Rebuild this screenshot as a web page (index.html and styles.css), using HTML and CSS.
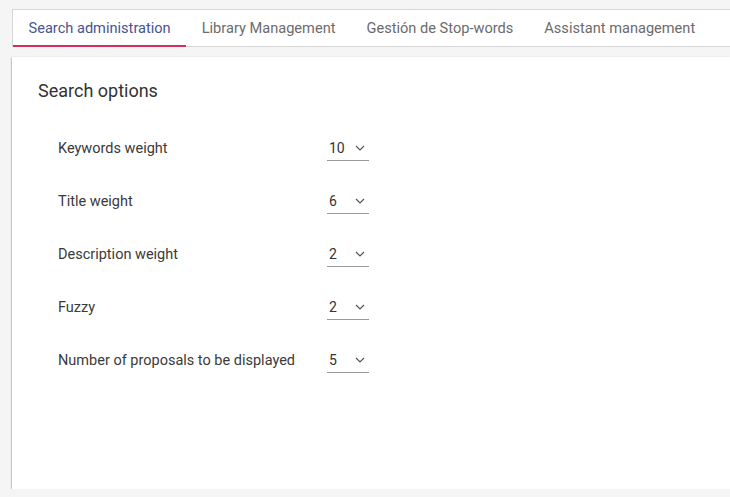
FILE: index.html
```html
<!DOCTYPE html>
<html>
<head>
    <title>Search administration</title>
    <link rel="stylesheet" href="styles.css">
</head>
<body>
    <div class="tabs">
        <div class="tab active">Search administration</div>
        <div class="tab">Library Management</div>
        <div class="tab">Gestión de Stop-words</div>
        <div class="tab">Assistant management</div>
    </div>

    <div class="card">
        <h2>Search options</h2>
        <div class="options">
            <div class="row">
                <span class="label">Keywords weight</span>
                <div class="select"><span>10</span><svg viewBox="0 0 10 6" width="10" height="6"><path d="M1 1l4 4 4-4" fill="none" stroke="#555" stroke-width="1.2"/></svg></div>
            </div>
            <div class="row">
                <span class="label">Title weight</span>
                <div class="select"><span>6</span><svg viewBox="0 0 10 6" width="10" height="6"><path d="M1 1l4 4 4-4" fill="none" stroke="#555" stroke-width="1.2"/></svg></div>
            </div>
            <div class="row">
                <span class="label">Description weight</span>
                <div class="select"><span>2</span><svg viewBox="0 0 10 6" width="10" height="6"><path d="M1 1l4 4 4-4" fill="none" stroke="#555" stroke-width="1.2"/></svg></div>
            </div>
            <div class="row">
                <span class="label">Fuzzy</span>
                <div class="select"><span>2</span><svg viewBox="0 0 10 6" width="10" height="6"><path d="M1 1l4 4 4-4" fill="none" stroke="#555" stroke-width="1.2"/></svg></div>
            </div>
            <div class="row">
                <span class="label">Number of proposals to be displayed</span>
                <div class="select"><span>5</span><svg viewBox="0 0 10 6" width="10" height="6"><path d="M1 1l4 4 4-4" fill="none" stroke="#555" stroke-width="1.2"/></svg></div>
            </div>
        </div>
    </div>
</body>
</html>
```

FILE: styles.css
```css
body {
    margin: 0;
    padding: 9px 0 0 12px;
    background-color: #f5f5f5;
    font-family: Roboto, Arial, sans-serif;
    overflow: hidden;
}

.tabs {
    display: flex;
    height: 36px;
    background-color: #fff;
    border: 1px solid #d6d6d6;
    border-right: none;
}

.tab {
    display: flex;
    align-items: center;
    padding: 0 15.5px;
    font-size: 14.6px;
    color: #6b6b6b;
    border-bottom: 2px solid transparent;
    margin-bottom: -1px;
    white-space: nowrap;
}

.tab.active {
    color: #4a5490;
    border-bottom-color: #d42e5c;
}

.card {
    margin-top: 10px;
    height: 432px;
    box-sizing: border-box;
    background-color: #fff;
    padding: 22px 26px;
    box-shadow: 0 1px 2px rgba(0,0,0,0.35), -1px 0 1px rgba(0,0,0,0.08);
}

h2 {
    margin: 0;
    font-size: 18px;
    font-weight: 400;
    color: #333;
    line-height: 24px;
}

.options {
    padding-left: 20px;
    margin-top: 35px;
}

.row {
    display: flex;
    align-items: flex-start;
    height: 53px;
}

.label {
    width: 269px;
    font-size: 14.5px;
    color: #3a3a3a;
    line-height: 18px;
    padding-top: 2px;
}

.select {
    display: flex;
    align-items: center;
    justify-content: space-between;
    width: 42px;
    box-sizing: border-box;
    padding: 0 4px 2px 2px;
    border-bottom: 1px solid #9a9a9a;
    font-size: 14px;
    color: #333;
    line-height: 20px;
}
```
